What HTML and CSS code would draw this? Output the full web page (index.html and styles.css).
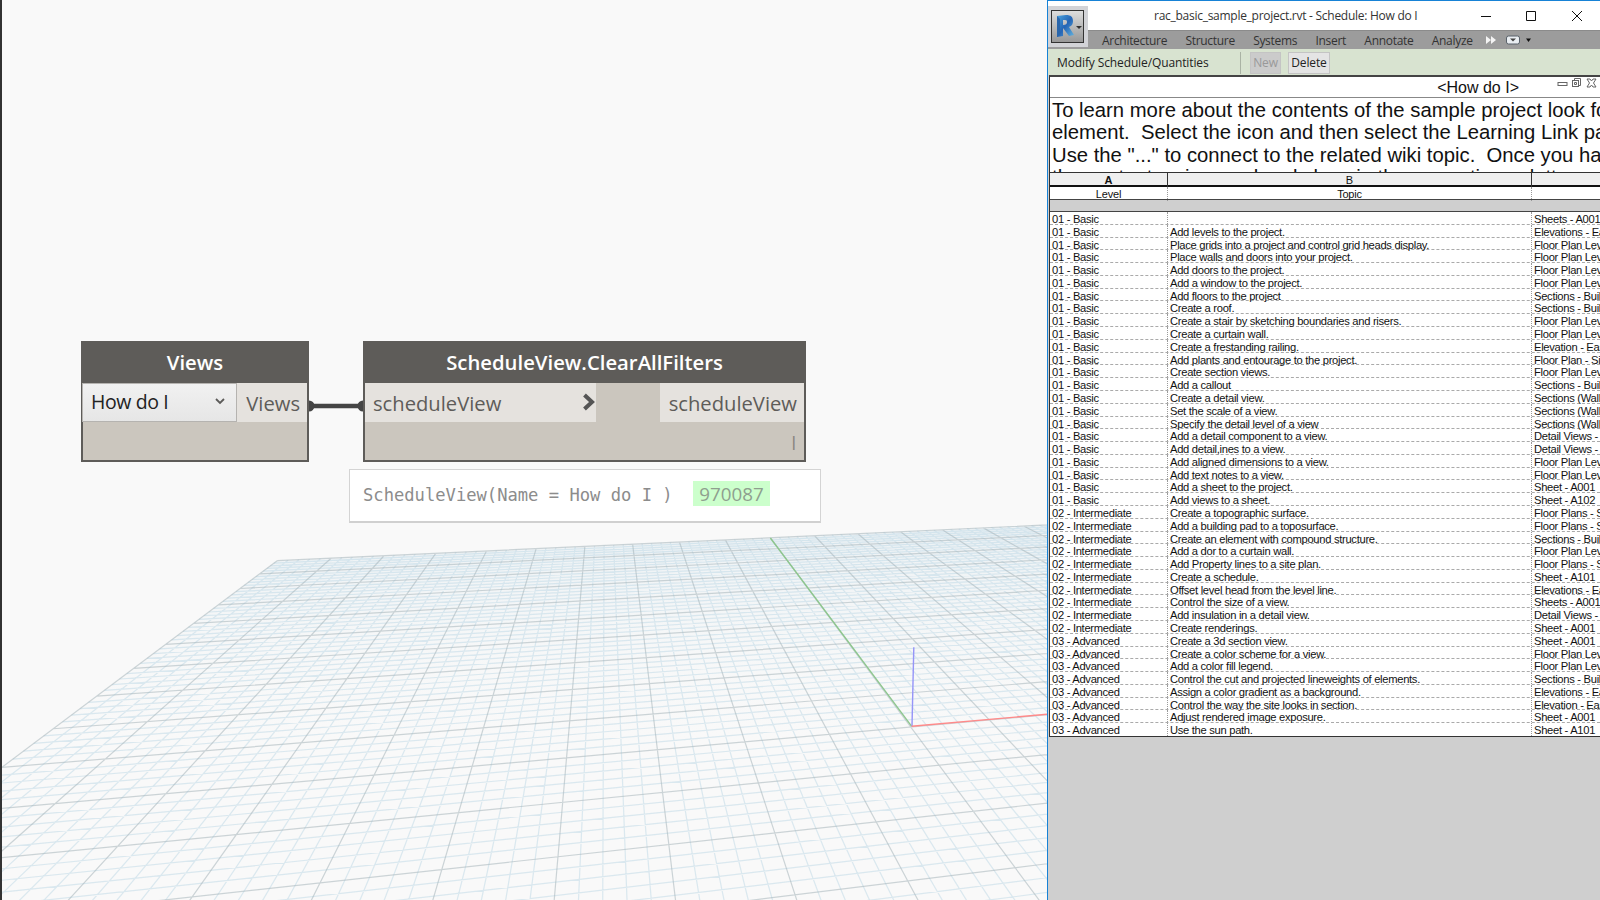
FILE: index.html
```html
<!DOCTYPE html>
<html lang="en">
<head>
<meta charset="utf-8">
<title>Schedule: How do I</title>
<link rel="stylesheet" href="styles.css">
</head>
<body>
<div class="app">
  <main class="workspace">
    <svg class="scene" width="1047" height="900" viewBox="0 0 1047 900">
      <defs><linearGradient id="haze" gradientUnits="userSpaceOnUse" x1="0" y1="530" x2="0" y2="760"><stop offset="0" stop-color="#dfeaf0" stop-opacity=".5"/><stop offset="1" stop-color="#f9f9f9" stop-opacity="0"/></linearGradient></defs>
      <path d="M277 561L1047 525V900H0V769Z" fill="url(#haze)"/>
      <path id="minor" class="grid-minor"/>
      <path id="major" class="grid-major"/>
      <path class="axis-y" d="M770.400 538L911.700 726.300"/>
      <path class="axis-z" d="M913.800 647.300L912 726.300"/>
      <path class="axis-x" d="M911.700 726.300L1047 714.300"/>
    </svg>
    <svg class="wire" width="60" height="14" viewBox="0 0 60 14"><path d="M5 7H55" stroke="#454545" stroke-width="4.500"/><path d="M2 1.500a5.500 5.500 0 0 1 0 11zM56 1.500a5.500 5.500 0 0 0 0 11z" fill="#454545"/></svg>
    <section class="node node-views">
      <h2 class="node-title">Views</h2>
      <div class="node-ports">
        <div class="select"><span>How do I</span><svg width="10" height="7" viewBox="0 0 10 7"><path d="M1 1l4 4 4-4" fill="none" stroke="#5c5b59" stroke-width="1.800"/></svg></div>
        <div class="port port-out">Views</div>
      </div>
    </section>
    <section class="node node-clear">
      <h2 class="node-title">ScheduleView.ClearAllFilters</h2>
      <div class="node-ports">
        <div class="port port-in"><span>scheduleView</span><svg width="13" height="18" viewBox="0 0 13 18"><path d="M1.500 2l7.500 7-7.500 7" fill="none" stroke="#555" stroke-width="4"/></svg></div>
        <div class="port port-out">scheduleView</div>
      </div>
      <span class="lacing">l</span>
    </section>
    <div class="preview"><code>ScheduleView(Name = How do I )</code><span class="element-id">970087</span></div>
  </main>
  <aside class="revit">
    <header class="titlebar">
      <span class="caption">rac_basic_sample_project.rvt - Schedule: How do I</span>
      <svg class="window-buttons" width="110" height="12" viewBox="0 0 110 12" fill="none" stroke="#111"><path d="M0 6.500H10M45.500 1.500h9v9h-9zM91 1l10 10M101 1L91 11"/></svg>
    </header>
    <nav class="tabs">
      <span>Architecture</span><span>Structure</span><span>Systems</span><span>Insert</span><span>Annotate</span><span>Analyze</span>
      <svg width="46" height="12" viewBox="0 0 46 12"><path d="M0 2l5 4-5 4zM5 2l5 4-5 4z" fill="#f4f4f4"/><rect x="20.500" y="2" width="13" height="8" rx="2" fill="#e9edf1" stroke="#59616a"/><path d="M24 4.500h6l-3 3z" fill="#444"/><path d="M40 4.500h5l-2.500 3.500z" fill="#111"/></svg>
    </nav>
    <div class="app-button"><div class="app-face"><svg width="32" height="32" viewBox="0 0 32 32"><defs><linearGradient id="blue" x1="0" y1="0" x2="1" y2="1"><stop offset="0" stop-color="#49a3df"/><stop offset=".5" stop-color="#2565b5"/><stop offset="1" stop-color="#65b5e0"/></linearGradient></defs><path fill-rule="evenodd" fill="url(#blue)" d="M5 5l9-1c5 0 7 2 7 6 0 3-1 5-4 6l5 8-5 1-6-8v8l-6 1zM11 9v5c3 0 4-1 4-3s-1-2-4-2z"/><path d="M5 5l3 3v15l-3 3z" fill="#2a66ab"/><path d="M24 15h6l-3 3z" fill="#333"/></svg></div></div>
    <div class="options"><span class="context">Modify Schedule/Quantities</span><span class="tool tool-off">New</span><span class="tool">Delete</span></div>
    <div class="sheet">
      <div class="sheet-title"><span>&lt;How do I&gt;</span>
        <svg width="40" height="12" viewBox="0 0 40 12" fill="none" stroke="#666"><rect x="1" y="5.500" width="9" height="3"/><path d="M17.500 3.500V1.500h6v7h-2"/><rect x="15.500" y="3.500" width="6" height="6"/><path d="M17.500 5.500h2v2h-2z"/><path d="M30 2h3l1.500 2L36 2h3l-2.500 4L39 10h-3l-1.500-2L33 10h-3l2.500-4z"/></svg></div>
      <div class="note"><p>To learn more about the contents of the sample project look for</p><p>element.&nbsp; Select the icon and then select the Learning Link par</p><p>Use the "..." to connect to the related wiki topic.&nbsp; Once you hav</p><p>the content, using read and close in the properties palette</p></div>
      <div class="row letters"><span>A</span><span>B</span><span></span></div>
      <div class="row names"><span>Level</span><span>Topic</span><span></span></div>
      <div class="spacer"></div>
      <div class="rows" id="rows"></div>
    </div>
  </aside>
</div>
<script src="app.js"></script>
</body>
</html>
```
FILE: styles.css
```css
* { box-sizing: border-box; }
body { margin: 0; width: 1600px; height: 900px; overflow: hidden; font-family: "Open Sans", sans-serif; }
.app { display: flex; width: 1600px; height: 900px; }
.workspace { position: relative; width: 1047px; height: 900px; flex: none; background: #f9f9f9; border-left: 2px solid #333; overflow: hidden; }
.scene { position: absolute; left: -2px; top: 0; }
.grid-minor { fill: none; stroke: #bcd8e6; stroke-width: 1.2; stroke-opacity: .5; }
.grid-major { fill: none; stroke: #a6b4ba; stroke-width: 1.2; stroke-opacity: .55; }
.axis-x, .axis-y, .axis-z { fill: none; stroke-width: 1.4; }
.axis-x { stroke: #ff8a8a; }
.axis-y { stroke: #8dc68d; }
.axis-z { stroke: #9595f8; }
.wire { position: absolute; left: 305px; top: 399px; }
.node { position: absolute; top: 341px; height: 121px; background: #cbc6be; border: 2px solid #5e5c59; border-top: 0; }
.node-views { left: 79px; width: 228px; }
.node-clear { left: 361px; width: 443px; }
.node-title { margin: 0 -2px; height: 42px; line-height: 43px; text-align: center; background: #5e5c59; color: #fff; font-size: 20.300px; font-weight: 600; }
.node-ports { display: flex; justify-content: space-between; height: 39px; }
.select { width: 155px; margin-left: -1px; padding: 0 11px 2px 8px; display: flex; align-items: center; justify-content: space-between; background: linear-gradient(#f1f1f1, #e6e6e6); border: 1px solid #b5b3b0; color: #222; font-size: 19.500px; letter-spacing: -.400px; }
.port { display: flex; align-items: center; background: #e5e2de; color: #5e5c59; font-size: 20.200px; padding: 0 7px 0; }
.port-out { padding-left: 9px; }
.port-in { width: 231px; justify-content: space-between; padding: 0 0 0 8px; }
.port-in svg { margin-top: -2px; }
.lacing { display: block; text-align: right; padding-right: 8px; margin-top: 9px; font-size: 18px; line-height: 24px; color: #8a8782; }
.preview { position: absolute; left: 347px; top: 469px; width: 472px; height: 54px; display: flex; align-items: center; padding: 0 0 3px 13px; background: #fff; border: 1px solid #d4d4d4; border-bottom: 2px solid #d0d0d0; }
.preview code { width: 330px; padding-top: 2px; font: 17.150px "DejaVu Sans Mono", monospace; color: #8c8c8c; white-space: pre; }
.element-id { width: 77px; height: 25px; margin-top: -2px; line-height: 26px; text-align: center; background: #ccffcc; color: #8f9f8f; font-size: 18.800px; }
.revit { position: relative; width: 553px; height: 900px; flex: none; background: #cfcfcf; border-left: 1px solid #1782d6; border-top: 1px solid #1782d6; overflow: hidden; }
.titlebar { height: 29px; background: #fff; display: flex; align-items: center; padding-left: 106px; }
.caption { font-size: 12px; letter-spacing: -.270px; color: #333; width: 327px; white-space: nowrap; }
.tabs { height: 19px; background: #9c9c9c; border-top: 1px solid #8b8b8b; display: flex; align-items: center; padding: 1px 0 0 54px; gap: 18.300px; font-size: 12px; letter-spacing: -.300px; color: #333; }
.tabs svg { margin: -2px 0 0 -5px; }
.app-button { position: absolute; left: 0; top: 5px; width: 40px; height: 41px; background: #d2d3d7; padding: 4px 3px; }
.app-face { width: 33px; height: 33px; border: 1px solid #333; background: linear-gradient(#ddd, #989898); }
.options { height: 26px; background: #d8e3d0; display: flex; align-items: center; padding: 1px 0 0 9px; font-size: 12px; letter-spacing: -.120px; color: #222; }
.context { width: 184px; height: 22px; line-height: 22px; border-right: 1px solid #aab3a4; margin-right: 9px; }
.tool { width: 42px; height: 22px; line-height: 20px; border: 1px solid #c4c4c4; background: #e4e4e4; text-align: center; }
.tool-off { width: 31px; background: #cbcbcb; color: #999; margin-right: 7px; }
.sheet { margin-left: 1px; border-left: 1px solid #333; border-top: 2px solid #444; background: #fff; font-family: "Liberation Sans", Arial, sans-serif; color: #111; }
.sheet-title { height: 21px; border-bottom: 1px solid #888; display: flex; justify-content: flex-end; align-items: flex-start; gap: 38px; font-size: 16px; line-height: 21px; padding-right: 3px; }
.note { height: 74px; padding: 1px 0 0 2px; overflow: hidden; font-size: 20.280px; line-height: 22.400px; white-space: nowrap; }
.note p { margin: 0; }
.row { display: grid; grid-template-columns: 118px 364px 1fr; }
.row span { white-space: nowrap; }
.letters { height: 15px; background: #efefef; border-top: 1px solid #333; border-bottom: 2px solid #111; text-align: center; font-size: 11px; line-height: 14px; }
.letters span { border-right: 1px solid #333; }
.letters span:first-child { font-weight: bold; }
.names { height: 12px; text-align: center; font-size: 11px; line-height: 14px; letter-spacing: -.200px; }
.names span { border-right: 1px dotted #999; }
.spacer { height: 13px; background: #cfcfcf; border-top: 1px solid #444; border-bottom: 1px solid #444; }
.rows { border-bottom: 1px solid #333; }
.rows .row { height: 12.790px; grid-template-rows: 100%; border-bottom: 1px dashed #aaa; font-size: 11.200px; line-height: 15px; letter-spacing: -.300px; }
.rows .row:last-child { border-bottom: 0; }
.rows span { padding-left: 2px; border-right: 1px dotted #999; }
.rows span:last-child, .names span:last-child, .letters span:last-child { border-right: 0; }
```
FILE: app.js
```js
// Projects the ground plane onto the viewport from four known plane/screen pairs.
function solveProjection(pairs) {
  const m = [];
  pairs.forEach(([u, v, x, y]) => {
    m.push([u, v, 1, 0, 0, 0, -u * x, -v * x, x]);
    m.push([0, 0, 0, u, v, 1, -u * y, -v * y, y]);
  });
  for (let i = 0; i < 8; i++) {
    let p = i;
    for (let r = i; r < 8; r++) if (Math.abs(m[r][i]) > Math.abs(m[p][i])) p = r;
    [m[i], m[p]] = [m[p], m[i]];
    for (let r = 0; r < 8; r++) {
      if (r === i) continue;
      const f = m[r][i] / m[i][i];
      for (let c = i; c < 9; c++) m[r][c] -= f * m[i][c];
    }
  }
  return m.map((row, i) => row[8] / row[i]);
}
const h = solveProjection([[-10, 10, 277.2, 560.7], [6, 10, 1023.6, 526], [-9, 0, 55.1, 803.7], [0, -3, 1015.1, 867.7]]);
const depth = (u, v) => h[6] * u + h[7] * v + 1;
function segment(u1, v1, u2, v2) {
  const near = 0.1;
  let a = depth(u1, v1), b = depth(u2, v2);
  if (a < near && b < near) return "";
  const cut = (near - a) / (b - a);
  const cu = u1 + (u2 - u1) * cut, cv = v1 + (v2 - v1) * cut;
  if (a < near) { u1 = cu; v1 = cv; }
  if (b < near) { u2 = cu; v2 = cv; }
  const at = (u, v) => {
    const w = depth(u, v);
    return ((h[0] * u + h[1] * v + h[2]) / w).toFixed(2) + " " + ((h[3] * u + h[4] * v + h[5]) / w).toFixed(2);
  };
  return "M" + at(u1, v1) + "L" + at(u2, v2);
}
let minor = "", major = "";
for (let i = -50; i <= 50; i++) {
  const t = i / 5;
  const d = segment(t, -10, t, 10) + segment(-10, t, 10, t);
  if (i % 5 === 0) major += d; else minor += d;
}
document.getElementById("minor").setAttribute("d", minor);
document.getElementById("major").setAttribute("d", major);

const F = "Floor Plan Level 1";
const levels = [
  ["01 - Basic", [
    ["", "Sheets - A001"], ["Add levels to the project.", "Elevations - East"],
    ["Place grids into a project and control grid heads display.", F], ["Place walls and doors into your project.", F],
    ["Add doors to the project.", F], ["Add a window to the project.", F],
    ["Add floors to the project", "Sections - Building"], ["Create a roof.", "Sections - Building"],
    ["Create a stair by sketching boundaries and risers.", F], ["Create a curtain wall.", F],
    ["Create a frestanding railing.", "Elevation - East"], ["Add plants and entourage to the project.", "Floor Plan - Site"],
    ["Create section views.", F], ["Add a callout", "Sections - Building"],
    ["Create a detail view.", "Sections (Wall)"], ["Set the scale of a view.", "Sections (Wall)"],
    ["Specify the detail level of a view", "Sections (Wall)"], ["Add a detail component to a view.", "Detail Views - "],
    ["Add detail,ines to a view.", "Detail Views - "], ["Add aligned dimensions to a view.", F],
    ["Add text notes to a view.", F], ["Add a sheet to the project.", "Sheet - A001"], ["Add views to a sheet.", "Sheet - A102"]]],
  ["02 - Intermediate", [
    ["Create a topographic surface.", "Floor Plans - Site"], ["Add a building pad to a toposurface.", "Floor Plans - Site"],
    ["Create an element with compound structure.", "Sections - Building"], ["Add a dor to a curtain wall.", F],
    ["Add Property lines to a site plan.", "Floor Plans - Site"], ["Create a schedule.", "Sheet - A101"],
    ["Offset level head from the level line.", "Elevations - East"], ["Control the size of a view.", "Sheets - A001"],
    ["Add insulation in a detail view.", "Detail Views - "], ["Create renderings.", "Sheet - A001"]]],
  ["03 - Advanced", [
    ["Create a 3d section view.", "Sheet - A001"], ["Create a color scheme for a view.", F], ["Add a color fill legend.", F],
    ["Control the cut and projected lineweights of elements.", "Sections - Building"],
    ["Assign a color gradient as a background.", "Elevations - East"], ["Control the way the site looks in section.", "Elevation - East"],
    ["Adjust rendered image exposure.", "Sheet - A001"], ["Use the sun path.", "Sheet - A101"]]]
];
const rows = document.getElementById("rows");
levels.forEach(([level, items]) => items.forEach(([topic, view]) => {
  const row = document.createElement("div");
  row.className = "row";
  [level, topic, view].forEach(text => {
    const cell = document.createElement("span");
    cell.textContent = text;
    row.append(cell);
  });
  rows.append(row);
}));
```
